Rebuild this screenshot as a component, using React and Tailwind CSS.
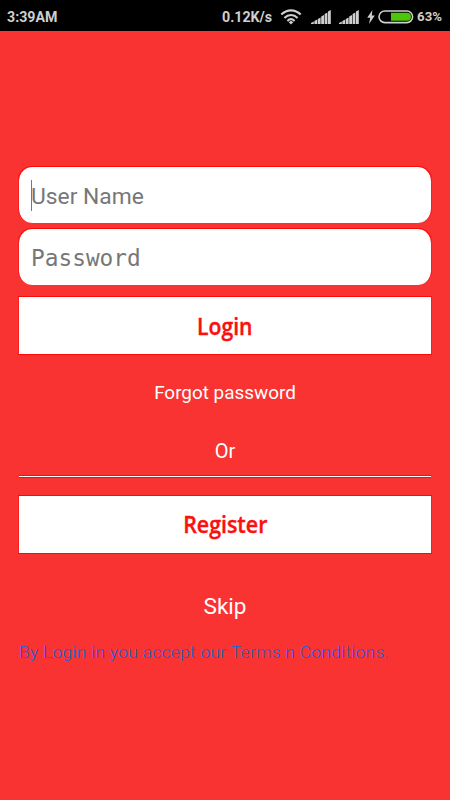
import React, { useState } from "react";

const SIGNAL_BARS = [2, 4, 6, 8.5, 11, 13.5];

function WifiIcon() {
  return (
    <svg width="22" height="16" viewBox="0 0 22 16" fill="none" stroke="#cfcfcf" strokeWidth="2.1">
      <path d="M1.3 5.6C7 0 15 0 20.7 5.6" />
      <path d="M4.4 8.9C8.2 5.1 13.8 5.1 17.6 8.9" />
      <path d="M7.4 11.9C9.6 9.8 12.4 9.8 14.6 11.9" />
      <path d="M11 11.8L13.3 13.2L11 15.6L8.7 13.2Z" fill="#cfcfcf" stroke="none" />
    </svg>
  );
}

function SignalIcon() {
  return (
    <svg width="20" height="14" viewBox="0 0 20 14" fill="#cfcfcf">
      {SIGNAL_BARS.map((h, i) => (
        <path key={h} d={`M${i * 3.4} 14V${15 - h}L${i * 3.4 + 2.8} ${13.6 - h}V14Z`} />
      ))}
    </svg>
  );
}

function BoltIcon() {
  return (
    <svg width="8" height="14" viewBox="0 0 8 14" fill="#cfcfcf">
      <path d="M5.4 0L0.2 7.8H3.2L2 14L7.8 5.4H4.8Z" />
    </svg>
  );
}

function BatteryIcon() {
  return (
    <svg width="36" height="14" viewBox="0 0 36 14">
      <rect x="1" y="1" width="33.6" height="11.6" rx="5.8" fill="#000" stroke="#cfcfcf" strokeWidth="1.6" />
      <path d="M13 2.8H29a4 4 0 0 1 0 8H13Z" fill="#4cc60a" />
    </svg>
  );
}

function StatusBar() {
  return (
    <header className="flex h-[31px] items-center bg-black pl-[7px] pr-2 pt-0.5 text-[14.2px] font-bold leading-none text-[#cfcfcf]">
      <span className="pt-px">3:39AM</span>
      <div className="ml-auto flex items-center">
        <span className="pt-px">0.12K/s</span>
        <span className="ml-2"><WifiIcon /></span>
        <span className="ml-[9px]"><SignalIcon /></span>
        <span className="ml-2"><SignalIcon /></span>
        <span className="ml-2"><BoltIcon /></span>
        <span className="ml-[3px]"><BatteryIcon /></span>
        <span className="ml-[3px] text-[13.2px]">63%</span>
      </div>
    </header>
  );
}

export default function App() {
  const [username, setUsername] = useState("");
  const [password, setPassword] = useState("");

  return (
    <div className="h-[800px] w-[450px] overflow-hidden bg-[#f93232] font-['Roboto',sans-serif]">
      <StatusBar />
      <main className="flex flex-col pl-[18px] pr-[18px] pt-[136px] text-white">
        <div className="flex h-14 items-center rounded-[14px] border-x border-[#fb2020] bg-white bg-clip-padding pl-3 shadow-[0_-1px_0_#ff0808]">
          <span className="h-[31px] w-px bg-[#777777]" />
          <input
            type="text"
            placeholder="User Name"
            value={username}
            onChange={(e) => setUsername(e.target.value)}
            className="-ml-px w-80 bg-transparent pt-[5px] text-[22.8px] text-[#777777] outline-none placeholder:text-[#777777]"
          />
        </div>
        <div className="mt-1.5 flex h-14 items-center rounded-[14px] border-x border-[#fb2020] bg-white bg-clip-padding pl-3 shadow-[0_-1px_0_#ff0808]">
          <input
            type="password"
            placeholder="Password"
            value={password}
            onChange={(e) => setPassword(e.target.value)}
            className="w-80 bg-transparent pt-[3px] font-['DejaVu_Sans_Mono',monospace] text-[22.8px] text-[#777777] outline-none placeholder:text-[#777777]"
          />
        </div>
        <button className="mt-3 flex h-[57px] items-center justify-center border-x border-[#fb2020] bg-white bg-clip-padding font-['Open_Sans',sans-serif] text-[23.5px] font-semibold text-[#fb1010] shadow-[0_-1px_0_#ff0808,0_1px_0_#ff0808]">
          <span className="mt-0.5 scale-x-[0.9] [-webkit-text-stroke:0.4px_#fb1010]">Login</span>
        </button>
        <button className="mt-[25px] h-7 text-[18.9px] leading-7">Forgot password</button>
        <p className="mt-[30px] h-7 text-center text-[20px] leading-7">Or</p>
        <hr className="mx-px mt-[11px] h-px border-0 bg-white shadow-[0_-1px_0_#ff0808,0_1px_0_#ff0808]" />
        <button className="mt-[19px] flex h-[57px] items-center justify-center border-x border-[#fb2020] bg-white bg-clip-padding font-['Open_Sans',sans-serif] text-[23.5px] font-semibold text-[#fb1010] shadow-[0_-1px_0_#ff0808,0_1px_0_#ff0808]">
          <span className="scale-x-[0.91] [-webkit-text-stroke:0.4px_#fb1010]">Register</span>
        </button>
        <button className="mt-10 h-7 text-[22.6px] leading-7">Skip</button>
        <p className="ml-px mt-[19px] whitespace-nowrap text-[17.2px] font-light leading-6 tracking-[0.39px] text-[#0a66e8]">
          By Login in you accept our Terms n Conditions.
        </p>
      </main>
    </div>
  );
}
